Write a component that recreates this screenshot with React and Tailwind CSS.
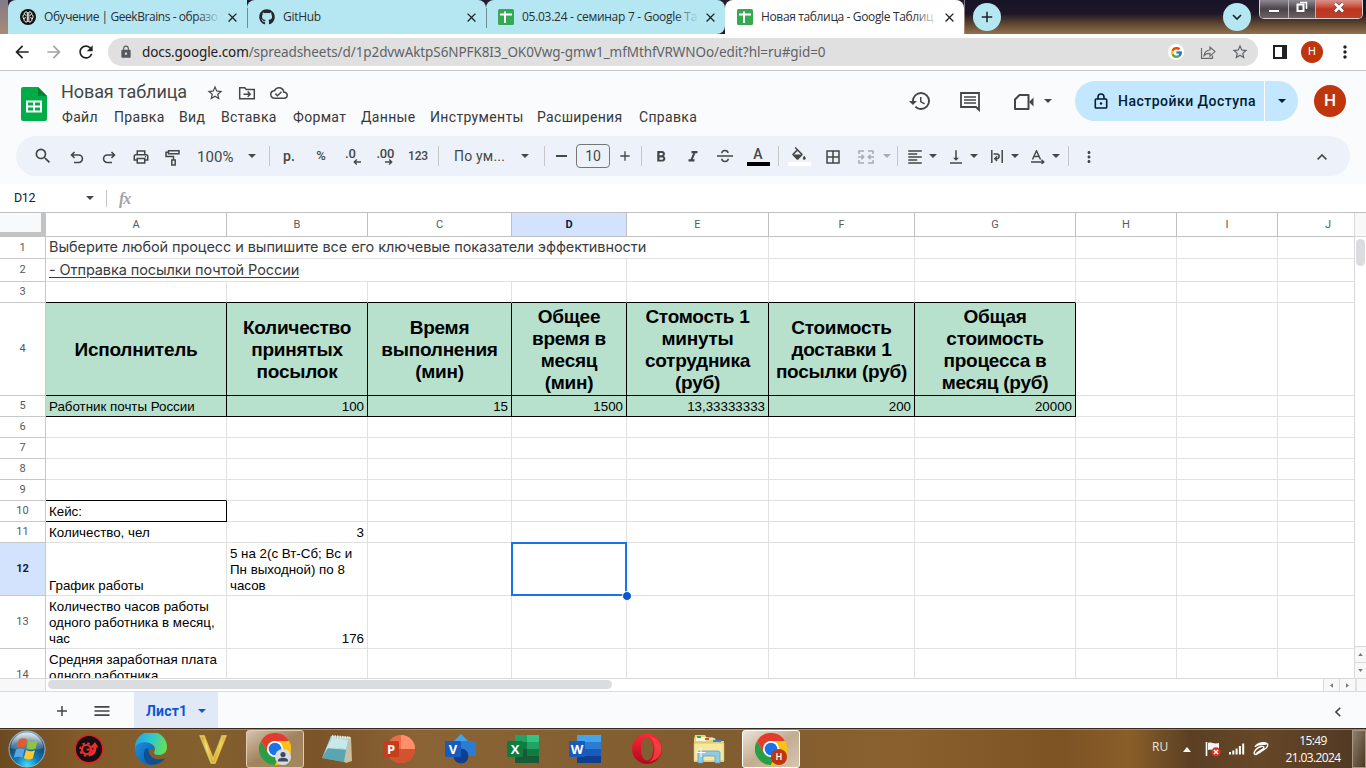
import React from "react";
import { FcGoogle } from "react-icons/fc";
import { FaGithub } from "react-icons/fa";
import {
  MdStarBorder, MdHistory, MdOutlinePrint, MdFormatBold, MdFormatItalic,
  MdBorderAll, MdFormatAlignLeft, MdVerticalAlignBottom, MdMoreVert, MdSearch, MdMenu,
  MdAdd, MdClose, MdLock, MdArrowBack, MdArrowForward, MdRefresh,
  MdOutlineCloudDone, MdFormatColorFill,
} from "react-icons/md";

function Caret({ className = "text-[#444746]" }) {
  return (
    <svg viewBox="0 0 8 4" className={`h-1 w-2 shrink-0 ${className}`}>
      <path d="M0 0h8L4 4z" fill="currentColor" />
    </svg>
  );
}

function SheetsFavicon() {
  return (
    <svg viewBox="0 0 16 16" className="h-4 w-4 shrink-0">
      <rect width="16" height="16" rx="1.5" fill="#34a853" />
      <path d="M2 4.500h12v2H2zM6 2.500h2v11.500H6z" fill="#fff" />
    </svg>
  );
}

function BrainFavicon() {
  return (
    <svg viewBox="0 0 16 16" className="h-4 w-4 shrink-0">
      <circle cx="8" cy="8" r="8" fill="#111" />
      <g fill="none" stroke="#fff" strokeWidth="1">
        <path d="M7.300 3v10M8.800 3v10M7 3C5 2.500 4 4 4.300 5.200 2.500 6 2.500 9 4 10c-.3 2 1.500 3.300 3 3M9 3c2-.5 3 1 2.700 2.200C13.500 6 13.500 9 12 10c.3 2-1.500 3.300-3 3M4.300 5.300c1 0 1.700.7 1.700 1.500M4 10c.2-1 1-1.400 2-1.200M11.700 5.300c-1 0-1.700.7-1.700 1.500M12 10c-.2-1-1-1.400-2-1.200" />
      </g>
    </svg>
  );
}

const tabs = [
  { icon: <BrainFavicon />, label: "Обучение | GeekBrains - образо", cls: "rounded-tl-lg bg-[#b4e7f2]", fade: "to-[#b4e7f2]", track: "tracking-[-0.44px]" },
  { icon: <FaGithub className="h-4 w-4 shrink-0 text-[#24292f]" />, label: "GitHub", cls: "rounded-t-lg bg-[#b4e7f2]", fade: "to-[#b4e7f2]", track: "tracking-[-0.3px]" },
  { icon: <SheetsFavicon />, label: "05.03.24 - семинар 7 - Google Та", cls: "rounded-t-lg rounded-br-lg bg-[#b4e7f2]", fade: "to-[#b4e7f2]", track: "tracking-[-0.28px]" },
  { icon: <SheetsFavicon />, label: "Новая таблица - Google Таблиц", cls: "rounded-t-lg bg-white", fade: "to-white", track: "tracking-[-0.36px]" },
];

function TabStrip() {
  return (
    <div className="flex h-[34px] items-start bg-[#1c1730] font-['Open_Sans','Noto_Sans',sans-serif]">
      <div className="flex h-[34px] w-[965px] shrink-0 bg-[linear-gradient(#82798a,#a98a74)] pl-2">
        <div className="flex h-[34px] bg-[#231b31]">
          {tabs.map((t, i) => (
            <div key={i} className={`relative flex h-[34px] w-[239px] shrink-0 items-center pl-3 ${t.cls}`}>
              {t.icon}
              <div className={`relative ml-2 w-[177px] overflow-hidden text-[12px] leading-4 whitespace-nowrap text-[#2b2f33] ${t.track}`}>
                {t.label}
                <div className={`absolute inset-y-0 right-0 w-6 bg-linear-to-r from-transparent ${t.fade}`} />
              </div>
              <MdClose className="ml-1 h-[15px] w-[15px] text-[#202124]" />
              {i < 2 && <div className="absolute top-2 -right-px z-10 h-5 w-px bg-[#6f8b93]" />}
            </div>
          ))}
        </div>
      </div>
      <div className="flex h-[34px] grow items-start bg-[linear-gradient(#171428_0%,#1d1727_40%,#5a422f_68%,#93724d_100%)] pl-2">
        <div className="mt-[3px] flex h-7 w-7 items-center justify-center rounded-full bg-[#b4e7f2]">
          <MdAdd className="h-[18px] w-[18px] text-[#202124]" />
        </div>
        <div className="mt-[3px] ml-[222px] flex h-7 w-7 items-center justify-center rounded-full bg-[#b4e7f2]">
          <svg viewBox="0 0 10 6" className="h-1.5 w-2.5"><path d="M1 1l4 4 4-4" fill="none" stroke="#202124" strokeWidth="1.700" /></svg>
        </div>
        <div className="ml-2 flex h-[19px] w-[104px] overflow-hidden rounded-b-[5px] border border-t-0 border-[#d8cfcf]">
          <div className="flex h-full w-[29px] items-center justify-center border-r border-[#b9b0b3] bg-linear-to-b from-[#8f8994] via-[#4b444c] to-[#6d6360]">
            <div className="mt-1 h-1 w-3 rounded-[1px] border border-[#4d4650] bg-white" />
          </div>
          <div className="flex h-full w-[27px] items-center justify-center border-r border-[#b9b0b3] bg-linear-to-b from-[#8f8994] via-[#4b444c] to-[#6d6360]">
            <svg viewBox="0 0 12 12" className="-mt-1 h-3 w-3"><path d="M4 1.500h6.500v6.500" fill="none" stroke="#fff" strokeWidth="1.500" /><rect x="1.500" y="3.500" width="6" height="6.500" fill="none" stroke="#fff" strokeWidth="2" /></svg>
          </div>
          <div className="flex h-full grow items-center justify-center bg-linear-to-b from-[#d9928a] via-[#c2331d] to-[#b8412e]">
            <svg viewBox="0 0 12 11" className="-mt-[3px] h-[11px] w-3"><path d="M2 1.500l8 8M10 1.500l-8 8" stroke="#5d4a53" strokeWidth="4" /><path d="M2 1.500l8 8M10 1.500l-8 8" stroke="#fff" strokeWidth="2.600" /></svg>
          </div>
        </div>
      </div>
    </div>
  );
}

function AddressBar() {
  return (
    <div className="flex h-[37px] items-center border-b border-[#c4c7ca] bg-white pl-3 font-['Noto_Sans','Open_Sans',sans-serif]">
      <MdArrowBack className="h-5 w-5 text-[#202124]" />
      <MdArrowForward className="ml-3 h-5 w-5 text-[#a4a4a4]" />
      <MdRefresh className="ml-3 h-5 w-5 text-[#202124]" />
      <div className="ml-3 flex h-7 w-[1150px] shrink-0 items-center rounded-full bg-[#e0e0e0] pl-[11px]">
        <MdLock className="h-3.5 w-3.5 text-[#55585c]" />
        <div className="ml-[9px] w-[1026px] shrink-0 text-[13.500px] tracking-[-0.085px] whitespace-nowrap text-[#5f6368]">
          <span className="text-[#202124]">docs.google.com</span>/spreadsheets/d/1p2dvwAktpS6NPFK8I3_OK0Vwg-gmw1_mfMthfVRWNOo/edit?hl=ru#gid=0
        </div>
        <div className="flex h-4 w-4 shrink-0 items-center justify-center rounded-full bg-white"><FcGoogle className="h-[13px] w-[13px]" /></div>
        <svg viewBox="0 0 16 16" className="ml-4 h-4 w-4 shrink-0" fill="none" stroke="#6b6b6b" strokeWidth="1.200">
          <path d="M1.500 4v10.400h11V11.500M4 11.500c.6-3.500 2.600-5.300 6-5.500V3l5 4.600-5 4.500V9.400C7.500 9.300 5.500 10 4 11.500z" />
        </svg>
        <MdStarBorder className="ml-[15px] h-[18px] w-[18px] shrink-0 text-[#5f6368]" />
      </div>
      <div className="ml-[15px] h-[14px] w-[14px] border-2 border-r-[5px] border-[#202124]" />
      <div className="ml-[14px] flex h-[22px] w-[22px] items-center justify-center rounded-full bg-[#c0360c] font-['Roboto',sans-serif] text-[11px] text-white">Н</div>
      <MdMoreVert className="ml-3 h-5 w-5 text-[#202124]" />
    </div>
  );
}

const menu = [
  ["Файл", "w-[52px]"], ["Правка", "w-[65px]"], ["Вид", "w-[42px]"], ["Вставка", "w-[72px]"],
  ["Формат", "w-[68px]"], ["Данные", "w-[69px]"], ["Инструменты", "w-[107px]"], ["Расширения", "w-[102px]"], ["Справка", "w-[60px]"],
];

function DocHeader() {
  return (
    <div className="flex h-[65px] bg-[#f9fbfd]">
      <svg viewBox="0 0 26 34" className="mt-4 ml-[21px] h-[34px] w-[26px] shrink-0">
        <path d="M2 0h15l9 9v23a2 2 0 0 1-2 2H2a2 2 0 0 1-2-2V2a2 2 0 0 1 2-2z" fill="#00ac47" />
        <path d="M17 0l9 9h-9z" fill="#00832d" />
        <path d="M5 13.500h16v12H5z" fill="#fff" />
        <path d="M7 15.500h5v3H7zM14 15.500h5v3h-5zM7 20.500h5v3H7zM14 20.500h5v3h-5z" fill="#00ac47" />
      </svg>
      <div className="ml-[14px] w-[700px] pt-[9px] font-['Roboto',sans-serif]">
        <div className="flex h-6 items-center">
          <div className="w-[145px] text-[18px] leading-6 tracking-[-0.08px] whitespace-nowrap text-[#444746]">Новая таблица</div>
          <MdStarBorder className="h-[18px] w-[18px] translate-y-px text-[#444746]" />
          <svg viewBox="0 0 18 16" className="ml-[14px] h-4 w-[18px] translate-y-px" fill="none" stroke="#444746" strokeWidth="1.500">
            <path d="M1.700 2.700h5l1.600 1.800h8v9.300H1.700zM1.700 2v3M5.500 9.200h6.500M9.700 6.600l2.500 2.600-2.500 2.600" />
          </svg>
          <MdOutlineCloudDone className="ml-[14px] h-[18px] w-[18px] translate-y-px text-[#444746]" />
        </div>
        <div className="mt-[3px] flex h-5 items-center pl-px text-[14px] tracking-[0.33px] text-[#37383a]">
          {menu.map(([label, w]) => <div key={label} className={`shrink-0 whitespace-nowrap ${w}`}>{label}</div>)}
        </div>
      </div>
      <div className="ml-auto flex h-[60px] items-center pr-5">
        <MdHistory className="h-6 w-6 text-[#444746]" />
        <svg viewBox="0 0 20 20" className="mt-0.5 ml-7 h-5 w-5" fill="none" stroke="#444746" strokeWidth="1.800">
          <path d="M1 1h18v17l-3-3H1z" /><path d="M4 5h12M4 8h12M4 11h12" strokeWidth="1.500" />
        </svg>
        <svg viewBox="0 0 22 18" className="mt-0.5 ml-[33px] h-[18px] w-[22px]" fill="none" stroke="#444746" strokeWidth="2">
          <path d="M6.500 2h9v14H2V6.500z" strokeLinejoin="round" /><path d="M16 9l4.500-4.500v9z" fill="#444746" stroke="none" />
        </svg>
        <Caret className="ml-[9px] text-[#444746]" />
        <div className="ml-[23px] flex h-10 w-[223px] overflow-hidden rounded-full bg-[#c2e7ff]">
          <div className="flex w-[190px] items-center border-r border-white pl-[19px]">
            <svg viewBox="0 0 14 16" className="h-4 w-[14px]" fill="none" stroke="#001d35" strokeWidth="1.600">
              <rect x="1.300" y="6" width="11.400" height="9" rx=".8" /><path d="M4 6V4a3 3 0 0 1 6 0v2" /><circle cx="7" cy="10.500" r="1.200" fill="#001d35" stroke="none" />
            </svg>
            <span className="ml-[10px] font-['Roboto',sans-serif] text-[14px] font-medium tracking-[0.48px] whitespace-nowrap text-[#001d35]">Настройки Доступа</span>
          </div>
          <div className="flex grow items-center justify-center"><Caret className="text-[#001d35]" /></div>
        </div>
        <div className="ml-4 flex h-8 w-8 items-center justify-center rounded-full bg-[#c0360c] font-['Roboto',sans-serif] text-[17px] font-medium text-white">Н</div>
      </div>
    </div>
  );
}

const Slot = ({ className, children }) => <div className={`flex h-full shrink-0 items-center ${className}`}>{children}</div>;
const Bar = ({ className }) => <div className={`h-5 w-px shrink-0 bg-[#c7c7c7] ${className}`} />;

function Toolbar() {
  return (
    <div className="flex h-12 bg-[#f9fbfd] px-4">
      <div className="flex h-10 w-full items-center rounded-full bg-[#edf2fa] pl-[10px] font-['Roboto',sans-serif] text-[14px] text-[#444746]">
        <Slot className="w-8 justify-center pl-px"><MdSearch className="h-5 w-5" /></Slot>
        <Slot className="ml-[3px] w-8 justify-center">
          <svg viewBox="0 0 14 14" className="mt-[3px] h-[14px] w-[14px]" fill="none" stroke="currentColor" strokeWidth="1.600"><path d="M4.500 1L1.500 4l3 3M1.500 4h7.200a3.700 3.700 0 0 1 0 7.500H4" /></svg>
        </Slot>
        <Slot className="w-8 justify-center">
          <svg viewBox="0 0 14 14" className="mt-[3px] h-[14px] w-[14px]" fill="none" stroke="currentColor" strokeWidth="1.600"><path d="M9.500 1l3 3-3 3M12.500 4H5.300a3.700 3.700 0 0 0 0 7.500H10" /></svg>
        </Slot>
        <Slot className="w-8 justify-center pt-px"><MdOutlinePrint className="h-[18px] w-[18px]" /></Slot>
        <Slot className="w-8 justify-center">
          <svg viewBox="0 0 15 18" className="mt-[3px] mr-[2px] h-[18px] w-[15px]" fill="none" stroke="currentColor" strokeWidth="1.500"><path d="M3.500 1.700h10.500v3H3.500zM3.500 3.200H1v4.300h7.500v3M6.800 11h3.400v5H6.800z" /></svg>
        </Slot>
        <Slot className="ml-2 w-[47px] pt-0.5 text-[15px] tracking-[0.1px]">100%</Slot>
        <Slot className="w-4 justify-center"><Caret /></Slot>
        <Bar className="ml-[9px]" />
        <Slot className="ml-[3px] w-8 justify-center font-medium">р.</Slot>
        <Slot className="w-8 justify-center text-[13px] font-medium">%</Slot>
        <Slot className="w-8 justify-center">
          <div className="flex w-4 flex-col"><span className="text-[13px] leading-[11px] font-medium">.0</span><svg viewBox="0 0 8 6" className="ml-2 h-1.5 w-2" fill="none" stroke="currentColor" strokeWidth="1.400"><path d="M8 3H1.500M3.800.600L1.300 3l2.500 2.400" /></svg></div>
        </Slot>
        <Slot className="w-[33px] justify-center">
          <div className="flex w-[18px] flex-col"><span className="text-[13px] leading-[11px] font-medium tracking-[-0.3px]">.00</span><svg viewBox="0 0 8 6" className="ml-2 h-1.5 w-2" fill="none" stroke="currentColor" strokeWidth="1.400"><path d="M0 3h6.500M4.200.600L6.700 3 4.200 5.400" /></svg></div>
        </Slot>
        <Slot className="w-8 justify-center text-[12px] font-medium tracking-[-0.2px]">123</Slot>
        <Bar className="ml-1" />
        <Slot className="ml-[15px] w-[62px] tracking-[0.2px] whitespace-nowrap">По ум...</Slot>
        <Slot className="ml-px w-4 justify-center"><Caret /></Slot>
        <Bar className="ml-[11px]" />
        <Slot className="ml-1 w-6 justify-center"><div className="h-[1.500px] w-[11px] bg-[#444746]" /></Slot>
        <div className="ml-[3px] flex h-6 w-[34px] shrink-0 items-center justify-center rounded-[4px] border border-[#747775]">10</div>
        <Slot className="ml-[3px] w-6 justify-center"><MdAdd className="h-4 w-4" /></Slot>
        <Bar className="ml-1" />
        <Slot className="ml-[3px] w-8 justify-center pt-px"><MdFormatBold className="h-[18px] w-[18px]" /></Slot>
        <Slot className="w-8 justify-center pt-px"><MdFormatItalic className="h-[18px] w-[18px]" /></Slot>
        <Slot className="w-8 justify-center">
          <svg viewBox="0 0 16 14" className="h-[14px] w-4" fill="none" stroke="currentColor" strokeWidth="1.500"><path d="M0 7h16M4.800 4.300a3 2.600 0 0 1 6.200-.3M4.800 9.700a3.200 2.700 0 0 0 6.400 0" /></svg>
        </Slot>
        <Slot className="w-[34px] justify-center"><div className="mt-px flex w-[23px] flex-col items-center"><span className="text-[14px] leading-[15px] font-medium">A</span><div className="h-1 w-[23px] bg-black" /></div></Slot>
        <Bar className="ml-[3px]" />
        <Slot className="ml-1 w-8 justify-center"><div className="mt-px flex w-[23px] flex-col items-center"><MdFormatColorFill className="-mb-[3px] h-[18px] w-[18px]" /><div className="h-1 w-[23px] bg-white" /></div></Slot>
        <Slot className="ml-0.5 w-8 justify-center pt-px"><MdBorderAll className="h-[18px] w-[18px]" /></Slot>
        <Slot className="ml-px w-8 justify-center pt-px text-[#a9adb2]">
          <svg viewBox="0 0 16 14" className="h-[14px] w-4" fill="none" stroke="currentColor" strokeWidth="1.500"><path d="M6 1H1v3M10 1h5v3M1 10v3h5M15 10v3h-5M0 7h5.500M3.500 4.800L5.700 7 3.500 9.200M16 7h-5.500M12.500 4.800L10.300 7l2.200 2.200" /></svg>
        </Slot>
        <Slot className="w-[10px] justify-center"><Caret className="text-[#a9adb2]" /></Slot>
        <Bar className="ml-[5px]" />
        <Slot className="ml-[7px] w-5 justify-center pt-px"><MdFormatAlignLeft className="h-[18px] w-[18px]" /></Slot>
        <Slot className="w-4 justify-center"><Caret /></Slot>
        <Slot className="ml-[5px] w-5 justify-center pt-px"><MdVerticalAlignBottom className="h-[18px] w-[18px]" /></Slot>
        <Slot className="w-4 justify-center"><Caret /></Slot>
        <Slot className="ml-[5px] w-5 justify-center pt-px">
          <svg viewBox="0 0 12 13" className="h-[13px] w-3" fill="none" stroke="currentColor" strokeWidth="1.500"><path d="M.8 0v13M11.200 0v13M2.500 4h3.300a2.300 2.300 0 0 1 0 4.700H4M6 6.300L3.800 8.700 6 11" /></svg>
        </Slot>
        <Slot className="w-4 justify-center"><Caret /></Slot>
        <Slot className="ml-[5px] w-5 justify-center pt-px">
          <svg viewBox="0 0 14 14" className="h-[14px] w-[14px]" fill="none" stroke="currentColor" strokeWidth="1.400"><path d="M1.500 9.500L5.500.700l4 8.800M3 6.500h5M0 12h12.500M10.500 9.800l2.300 2.200-2.300 2" /></svg>
        </Slot>
        <Slot className="w-4 justify-center"><Caret /></Slot>
        <Bar className="ml-1" />
        <Slot className="ml-[10px] w-5 justify-center pt-px"><MdMoreVert className="h-[18px] w-[18px]" /></Slot>
        <Slot className="mr-4 ml-auto w-6 justify-center pt-px"><svg viewBox="0 0 10 6" className="h-1.5 w-2.5" fill="none" stroke="currentColor" strokeWidth="1.600"><path d="M.6 5.400L5 1l4.400 4.400" /></svg></Slot>
      </div>
    </div>
  );
}

function FormulaBar() {
  return (
    <div className="flex h-[29px] items-center border-b border-[#c0c0c0] bg-white pl-[14px]">
      <div className="w-[72px] font-['Roboto',sans-serif] text-[12.500px] tracking-[-0.4px] text-[#202124]">D12</div>
      <Caret />
      <div className="ml-3 h-[17px] w-px bg-[#c7c7c7]" />
      <div className="mt-0.5 ml-3 font-['Liberation_Serif',serif] text-[16px] font-bold tracking-[-1px] text-[#a3a3a3] italic">fx</div>
    </div>
  );
}

const W = ["w-[181px]", "w-[141px]", "w-[144px]", "w-[115px]", "w-[142px]", "w-[146px]", "w-[161px]", "w-[101px]", "w-[101px]", "w-[101px]"];
const letters = ["A", "B", "C", "D", "E", "F", "G", "H", "I", "J"];

function ColumnHeaders() {
  return (
    <div className="flex h-6 w-full overflow-hidden font-['Roboto',sans-serif] text-[11px] text-[#575a5a]">
      <div className="h-6 w-[46px] shrink-0 border-r-[5px] border-b-[5px] border-[#c3c3c3] bg-[#f8f9fa]" />
      <div className="flex h-6 w-[1309px] shrink-0 overflow-hidden border-r border-[#d9d9d9]">
        {letters.map((l, i) => (
          <div key={l} className={`flex shrink-0 items-center justify-center border-r border-b border-[#c0c0c0] pt-px ${W[i]} ${l === "D" ? "bg-[#d3e3fd] font-bold text-[#041e49]" : "bg-white"}`}>{l}</div>
        ))}
      </div>
      <div className="grow border-b border-[#d9d9d9] bg-[#f8f8f8]" />
    </div>
  );
}

const heads = [
  ["Исполнитель"], ["Количество", "принятых", "посылок"], ["Время", "выполнения", "(мин)"], ["Общее", "время в", "месяц", "(мин)"],
  ["Стомость 1", "минуты", "сотрудника", "(руб)"], ["Стоимость", "доставки 1", "посылки (руб)"], ["Общая", "стоимость", "процесса в", "месяц (руб)"],
];
const values = ["Работник почты России", "100", "15", "1500", "13,33333333", "200", "20000"];

function Cell({ i, className = "border-[#e1e1e1]", children }) {
  return <div className={`relative shrink-0 border-r border-b ${W[i]} ${className}`}>{children}</div>;
}

function Row({ n, h, active, children }) {
  return (
    <div className={`flex shrink-0 ${h}`}>
      <div className={`flex w-[46px] shrink-0 items-center justify-center border-r border-b border-[#c8c8c8] pt-px font-['Roboto',sans-serif] text-[11px] ${active ? "bg-[#d3e3fd] font-bold text-[#041e49]" : "bg-white text-[#575a5a]"}`}>
        {n}
      </div>
      {children}
    </div>
  );
}

const empties = (from, to = 9) => W.slice(from, to + 1).map((_, k) => <Cell key={from + k} i={from + k} />);

const Lines = ({ lines }) => (
  <div className="absolute bottom-px left-[3px] leading-4 whitespace-nowrap">
    {lines.map((l) => <div key={l}>{l}</div>)}
  </div>
);
const Num = ({ children }) => <div className="absolute right-[3px] bottom-px leading-4">{children}</div>;

function Grid() {
  return (
    <div className="flex h-[441px] overflow-hidden">
      <div className="w-[1355px] shrink-0 overflow-hidden border-r border-[#d9d9d9] font-['Liberation_Sans',Arial,sans-serif] text-[13.333px] text-black">
        <Row n="1" h="h-[22px]">
          <div className="w-[723px] shrink-0 border-r border-b border-[#e1e1e1] pl-[3px] font-['Inter',sans-serif] text-[14.500px] leading-[20px] tracking-[-0.08px] whitespace-nowrap text-[#3a3b3e]">Выберите любой процесс и выпишите все его ключевые показатели эффективности</div>
          {empties(5)}
        </Row>
        <Row n="2" h="h-[23px]">
          <div className="w-[581px] shrink-0 border-r border-b border-[#e1e1e1] pl-[3px] font-['Inter',sans-serif] text-[14.500px] leading-[22px] tracking-[-0.09px] whitespace-nowrap text-[#3a3b3e] underline underline-offset-2">- Отправка посылки почтой России</div>
          {empties(4)}
        </Row>
        <Row n="3" h="h-[21px]">
          {heads.map((_, i) => <Cell key={i} i={i} className="border-r-[#e1e1e1] border-b-black" />)}
          {empties(7)}
        </Row>
        <Row n="4" h="h-[93px]">
          {heads.map((lines, i) => (
            <Cell key={i} i={i} className="flex flex-col items-center justify-center border-black bg-[#b7e1cd] pt-0.5 text-[19px] leading-[22px] font-bold tracking-[-0.25px] whitespace-nowrap">
              {lines.map((l) => <div key={l}>{l}</div>)}
            </Cell>
          ))}
          {empties(7)}
        </Row>
        <Row n="5" h="h-[21px]">
          {values.map((v, i) => (
            <Cell key={i} i={i} className="border-black bg-[#b7e1cd]">{i === 0 ? <Lines lines={[v]} /> : <Num>{v}</Num>}</Cell>
          ))}
          {empties(7)}
        </Row>
        {["6", "7", "8"].map((n) => <Row key={n} n={n} h="h-[21px]">{empties(0)}</Row>)}
        <Row n="9" h="h-[21px]"><Cell i={0} className="border-r-[#e1e1e1] border-b-black" />{empties(1)}</Row>
        <Row n="10" h="h-[21px]"><Cell i={0} className="border-black"><Lines lines={["Кейс:"]} /></Cell>{empties(1)}</Row>
        <Row n="11" h="h-[21px]">
          <Cell i={0}><Lines lines={["Количество, чел"]} /></Cell><Cell i={1}><Num>3</Num></Cell>{empties(2)}
        </Row>
        <Row n="12" h="h-[53px]" active>
          <Cell i={0}><Lines lines={["График работы"]} /></Cell>
          <Cell i={1}><Lines lines={["5 на 2(с Вт-Сб; Вс и", "Пн выходной) по 8", "часов"]} /></Cell>
          <Cell i={2} />
          <Cell i={3}>
            <div className="absolute -top-px -right-px -bottom-px -left-px z-10 border-2 border-[#1a73e8]" />
            <div className="absolute -right-[6px] -bottom-[6px] z-20 h-[10px] w-[10px] rounded-full border border-white bg-[#0b57d0]" />
          </Cell>
          {empties(4)}
        </Row>
        <Row n="13" h="h-[53px]">
          <Cell i={0}><Lines lines={["Количество часов работы", "одного работника в месяц,", "час"]} /></Cell><Cell i={1}><Num>176</Num></Cell>{empties(2)}
        </Row>
        <Row n="14" h="h-[53px]">
          <Cell i={0}><div className="absolute top-[3px] left-[3px] leading-4 whitespace-nowrap"><div>Средняя заработная плата</div><div>одного работника</div></div></Cell>{empties(1)}
        </Row>
      </div>
      <div className="flex grow flex-col items-center bg-white">
        <div className="mt-0.5 h-[27px] w-[9px] rounded-full bg-[#dadce0]" />
        <div className="mt-auto flex h-4 w-full items-center justify-center border-t border-[#d9d9d9] bg-[#f8f8f8]"><svg viewBox="0 0 6 4" className="h-[3px] w-[5px]"><path d="M0 4h6L3 0z" fill="#777" /></svg></div>
        <div className="flex h-4 w-full items-center justify-center border-t border-[#d9d9d9] bg-[#f8f8f8]"><svg viewBox="0 0 6 4" className="h-[3px] w-[5px]"><path d="M0 0h6L3 4z" fill="#777" /></svg></div>
      </div>
    </div>
  );
}

function HorizontalScroll() {
  return (
    <div className="flex h-[13px] border-t border-[#d9d9d9] bg-white">
      <div className="w-[46px] shrink-0 border-r border-[#d9d9d9] bg-[#f8f8f8]" />
      <div className="mt-px ml-0.5 h-[9px] w-[564px] shrink-0 rounded-full bg-[#dadce0]" />
      <div className="ml-auto flex w-4 items-center justify-center border-l border-[#d9d9d9] bg-[#f8f8f8]"><svg viewBox="0 0 4 6" className="h-[5px] w-[3px]"><path d="M4 0v6L0 3z" fill="#777" /></svg></div>
      <div className="flex w-4 items-center justify-center border-l border-[#d9d9d9] bg-[#f8f8f8]"><svg viewBox="0 0 4 6" className="h-[5px] w-[3px]"><path d="M0 0v6l4-3z" fill="#777" /></svg></div>
      <div className="w-[11px] border-l-2 border-[#e1e1e1] bg-[#f8f8f8]" />
    </div>
  );
}

function SheetBar() {
  return (
    <div className="flex h-[37px] items-center border-t border-[#d9dbde] bg-[#f9fbfd] pl-[53px] text-[#444746]">
      <svg viewBox="0 0 10 10" className="mt-0.5 ml-1 h-2.5 w-2.5"><path d="M5 0v10M0 5h10" stroke="currentColor" strokeWidth="1.500" /></svg>
      <MdMenu className="mt-0.5 ml-[25px] h-5 w-5" />
      <div className="ml-[22px] flex h-full w-[84px] items-center bg-[#e1e9f7] pt-0.5 pl-3 font-['Roboto',sans-serif] text-[14px] font-bold text-[#0b57d0]">
        <span className="w-[52px] tracking-[0.2px] whitespace-nowrap">Лист1</span>
        <Caret className="text-[#0b57d0]" />
      </div>
      <svg viewBox="0 0 6 10" className="mt-[3px] mr-[25px] ml-auto h-2.5 w-1.5"><path d="M5.300.700L1 5l4.300 4.300" fill="none" stroke="#444746" strokeWidth="1.600" /></svg>
    </div>
  );
}

function StartOrb() {
  return (
    <svg viewBox="0 0 38 38" className="h-[38px] w-[38px]">
      <defs>
        <radialGradient id="orb" cx=".5" cy=".95" r=".9"><stop offset="0" stopColor="#3fe0ff" /><stop offset=".35" stopColor="#137ab5" /><stop offset=".75" stopColor="#16456e" /><stop offset="1" stopColor="#7fa6c2" /></radialGradient>
        <linearGradient id="shine" x1="0" y1="0" x2="0" y2="1"><stop offset="0" stopColor="#fff" stopOpacity=".75" /><stop offset="1" stopColor="#fff" stopOpacity=".12" /></linearGradient>
      </defs>
      <circle cx="19" cy="19" r="18" fill="url(#orb)" stroke="#98b6c8" strokeWidth="1" />
      <path d="M2.500 18C4 8 11 2.500 19 2.500S34 8 35.500 18c-8 3-25 3-33 0z" fill="url(#shine)" />
      <path d="M11 9.500c3-1.800 5.500-1.500 8 0L17 18c-3-1.500-5.500-1.500-8.500-.2z" fill="#e5592b" />
      <path d="M20.500 10.200c3 1.500 6 1.600 9.300.3l-2.300 8c-3 1.500-6 1.300-9-.2z" fill="#8cc63f" />
      <path d="M8 19.500c3-1.500 5.500-1.300 8.500.1l-2.200 8.200c-2.800-1.500-5.300-1.500-8.500-.1z" fill="#58a7e2" />
      <path d="M18 20c3 1.500 6 1.700 9 .3l-2.300 8.200c-3 1.500-5.800 1.200-8.800-.3z" fill="#fdc82f" />
    </svg>
  );
}

function ChromeLogo({ badge }) {
  return (
    <svg viewBox="0 0 32 32" className="h-8 w-8">
      <circle cx="16" cy="16" r="16" fill="#fbc116" />
      <path d="M2.100 8A16 16 0 0 0 16 32l6.900-12H9.100z" fill="#2a9d49" />
      <path d="M2.100 8A16 16 0 0 1 29.900 8H16a8 8 0 0 0-6.900 12z" fill="#e33b2e" />
      <path d="M16 32l6.900-12A8 8 0 0 0 16 8h13.900A16 16 0 0 1 16 32z" fill="#fbc116" />
      <circle cx="16" cy="16" r="8" fill="#fff" /><circle cx="16" cy="16" r="6.300" fill="#1a73e8" />
      {badge === "user" ? (
        <g><circle cx="24" cy="24" r="8" fill="#d9dde3" /><circle cx="24" cy="21.500" r="2.600" fill="#3c4a60" /><path d="M18.800 28.500c0-3 2.500-3.700 5.200-3.700s5.200.7 5.200 3.700z" fill="#3c4a60" /></g>
      ) : (
        <g><circle cx="24" cy="24" r="8" fill="#c0360c" /><text x="24" y="27.300" textAnchor="middle" fontSize="9" fontFamily="Roboto" fontWeight="500" fill="#fff">Н</text></g>
      )}
    </svg>
  );
}

function Badge({ color, letter }) {
  return <g><rect x="0" y="7" width="16" height="16" rx="1" fill={color} /><text x="8" y="19.600" textAnchor="middle" fontSize="13" fontFamily="Open Sans" fontWeight="700" fill="#fff">{letter}</text></g>;
}

const apps = [
  <svg viewBox="0 0 30 30" className="h-[30px] w-[30px]">
    <circle cx="15" cy="15" r="13.800" fill="#111" stroke="#ed1c24" strokeWidth="1.500" />
    <circle cx="12.500" cy="15.500" r="4.500" fill="none" stroke="#ef2b2d" strokeWidth="2.200" />
    <circle cx="12.500" cy="15.500" r="6.300" fill="none" stroke="#ef2b2d" strokeWidth="2" strokeDasharray="2.500 2.450" />
    <path d="M12.500 15.500h4" stroke="#ef2b2d" strokeWidth="2" /><path d="M15 21c4.500-.5 6-4 6-8" fill="none" stroke="#ef2b2d" strokeWidth="3" /><path d="M16.500 13l4.500-5 3.500 5.500z" fill="#ef2b2d" />
  </svg>,
  <svg viewBox="0 0 32 32" className="h-8 w-8">
    <defs>
      <linearGradient id="edgeTop" x1="0" y1=".3" x2="1" y2=".5"><stop offset="0" stopColor="#24a5e0" /><stop offset=".5" stopColor="#2fc8cf" /><stop offset="1" stopColor="#66e04f" /></linearGradient>
      <linearGradient id="edgeLow" x1="0" y1="0" x2="1" y2="1"><stop offset="0" stopColor="#1b8fe0" /><stop offset="1" stopColor="#0c59a4" /></linearGradient>
    </defs>
    <path d="M0 15A16 16 0 0 1 32 14c0 6-4.500 8-8.500 8s-5-1.600-4.300-3c2-3 .3-8.500-6.200-8.500C6 10.500 1 13 0 18z" fill="url(#edgeTop)" />
    <path d="M0 16c0-5 6-7.500 11.500-6.700 5 .8 8 3.700 8 7.700-6-4-11 6-3 15C7 32 0 25 0 16z" fill="url(#edgeLow)" />
    <path d="M13 15c-4 5-1.500 12 4.500 14.500 4 1.500 9.500.5 12-4-6 2.500-16 1-16.500-10.500z" fill="#114a8b" />
    <path d="M10 16c-3 8 0 14 6 16 6 0 11-2.500 13.800-7-6 3.500-18.800 1-16.600-9.800z" fill="#114f95" />
  </svg>,
  <svg viewBox="0 0 30 32" className="h-8 w-[30px]">
    <defs><linearGradient id="gold" x1="0" x2="1"><stop offset="0" stopColor="#a88522" /><stop offset=".25" stopColor="#f8e884" /><stop offset=".5" stopColor="#c9a52c" /><stop offset=".8" stopColor="#f0d964" /><stop offset="1" stopColor="#b8952c" /></linearGradient></defs>
    <text x="15" y="30" textAnchor="middle" fontSize="39" fontFamily="Liberation Sans" fill="url(#gold)" stroke="#e3c84f" strokeWidth="1.300">V</text>
  </svg>,
  <ChromeLogo badge="user" />,
  <svg viewBox="0 0 32 30" className="h-[30px] w-8">
    <path d="M10 2l20 1 1 24-6 2-3-2z" fill="#c9c0a4" /><path d="M10 2l18 2-5 24L1 24z" fill="#9bd0d6" /><path d="M11 4l16 2-2 9c-7-2-13 1-20 0z" fill="#d5edee" opacity=".8" /><path d="M7 14l18 2-2 12L1 24z" fill="#398c9d" opacity=".65" />
    <path d="M11 2.500l18 1.500" stroke="#e8e8e8" strokeWidth="3" strokeDasharray="1.500 1" />
  </svg>,
  <svg viewBox="0 0 32 30" className="h-[30px] w-8"><circle cx="18" cy="15" r="14" fill="#ed6c47" /><path d="M18 1a14 14 0 0 1 14 14H18z" fill="#ff8f6b" /><path d="M4 15h28a14 14 0 0 1-28 0z" fill="#d35230" /><Badge color="#c43e1c" letter="P" /></svg>,
  <svg viewBox="0 0 32 30" className="h-[30px] w-8"><path d="M16 0l8 8-8 8-8-8z" fill="#41a5ee" /><path d="M16 7h15v15H16z" fill="#2b7cd3" /><circle cx="16" cy="22" r="7.500" fill="#103f91" /><Badge color="#185abd" letter="V" /></svg>,
  <svg viewBox="0 0 32 30" className="h-[30px] w-8"><path d="M8 1h12v7H8z" fill="#21a366" /><path d="M20 1h12v7H20z" fill="#33c481" /><path d="M8 8h12v7H8z" fill="#107c41" /><path d="M20 8h12v7H20z" fill="#21a366" /><path d="M8 15h24v14H8z" fill="#185c37" /><path d="M20 15h12v7H20z" fill="#107c41" /><Badge color="#107c41" letter="X" /></svg>,
  <svg viewBox="0 0 32 30" className="h-[30px] w-8"><path d="M8 1h24v7H8z" fill="#41a5ee" /><path d="M8 8h24v7H8z" fill="#2b7cd3" /><path d="M8 15h24v7H8z" fill="#185abd" /><path d="M8 22h24v7H8z" fill="#103f91" /><Badge color="#185abd" letter="W" /></svg>,
  <svg viewBox="0 0 30 30" className="h-[30px] w-[30px]">
    <defs><linearGradient id="opera" x1="0" y1="0" x2="0" y2="1"><stop offset="0" stopColor="#ff2636" /><stop offset="1" stopColor="#b2061b" /></linearGradient></defs>
    <path fillRule="evenodd" d="M15 0a15 15 0 1 0 0 30 15 15 0 0 0 0-30zm0 3.500c3.600 0 6 5 6 11.500s-2.400 11.500-6 11.500S9 21.500 9 15s2.400-11.500 6-11.500z" fill="url(#opera)" />
    <path d="M16 2c4 1 6.500 6.500 6.500 13S20 27 16 28c8-1 13.500-6 13.500-13S24 3 16 2z" fill="#ff4b4b" opacity=".7" />
  </svg>,
  <svg viewBox="0 0 32 30" className="h-[30px] w-8">
    <path d="M2 1h10l2 3h8l1 3h8v21H1V5z" fill="#e8d37c" /><path d="M3 3h10v4H3z" fill="#fff7d8" /><path d="M4 2h4v2H4z" fill="#27b34a" /><path d="M12 3.500h8v2h-8z" fill="#f5f0dc" /><path d="M12 4h4v2h-4z" fill="#d9542b" /><path d="M20 6h8v2h-8z" fill="#2a8fe0" />
    <path d="M1 9h30v18H1z" fill="#f6e7a1" stroke="#cdb55c" strokeWidth=".6" />
    <path d="M5 29V19c0-1.500 1-2 2-2h18c1 0 2 .5 2 2v10h-5v-7H10v7z" fill="#8fcbe6" stroke="#4a9cc2" strokeWidth=".7" /><path d="M8 14v9M3.500 18.500h9" stroke="#fff" strokeWidth="1" />
  </svg>,
  <ChromeLogo badge="letter" />,
];

function Taskbar() {
  return (
    <div className="flex h-10 border-t border-[#3a2a1c] bg-[linear-gradient(90deg,#6c4a20_0px,#835a29_80px,#84602f_200px,#7b542a_320px,#8a6435_420px,#805c30_700px,#8a602e_900px,#7d5324_1060px,#8a5e29_1130px,#5b3f23_1190px,#664727_1260px,#4f3822_1366px)] font-['Open_Sans','Noto_Sans',sans-serif]">
      <div className="flex w-full border-t border-[#b99c78]/70">
        <div className="flex w-[58px] shrink-0 items-center pl-2"><StartOrb /></div>
        {apps.map((a, i) => (
          <div key={i} className="flex h-[38px] w-[62px] shrink-0 items-center justify-center">
            <div className={`flex h-[38px] w-[58px] items-center justify-center ${i === 3 ? "rounded-[3px] border border-[#dfccb2] bg-linear-to-br from-[#d5c4ae] via-[#a2835e] to-[#a48760]" : ""} ${i === 11 ? "rounded-[3px] border border-white bg-linear-to-br from-[#ece3d8] via-[#c3ad91] to-[#d6c5af]" : ""}`}>{a}</div>
          </div>
        ))}
        <div className="ml-auto flex items-center text-white">
          <div className="mb-1 w-[31px] text-[12px] text-[#e9e2da]">RU</div>
          <svg viewBox="0 0 8 5" className="h-[5px] w-2"><path d="M0 5h8L4 0z" fill="#fff" /></svg>
          <svg viewBox="0 0 16 16" className="ml-[14px] h-4 w-4"><path d="M1.500 1v14" stroke="#fff" strokeWidth="1.600" /><path d="M3 2c4-1.500 5 1.500 11 0v7c-5 1.500-7-1-11 0z" fill="#f4f4f4" /><circle cx="11" cy="11" r="4.700" fill="#d93025" /><path d="M9 9l4 4M13 9l-4 4" stroke="#fff" strokeWidth="1.500" /></svg>
          <svg viewBox="0 0 16 12" className="ml-2 h-3 w-4"><path d="M0 9h2v2.500H0zM3.300 7.500h2v4h-2zM6.600 5.500h2v6h-2zM9.900 3h2v8.500h-2zM13.200.500h2v11h-2z" fill="#fff" /></svg>
          <svg viewBox="0 0 16 14" className="ml-2 h-[14px] w-4"><path d="M2 5C5 0 12 0 14.500 2c1 3-2 5-5 6.500-3 2-5 4-7.500 4C-.5 10 4 5.500 8 4.500c2-.5 4 .5 2 2.500-2 1.500-5 2.500-7 5" fill="none" stroke="#fff" strokeWidth="1.400" /><path d="M2 5C5 0 12 0 14.500 2 11 4 7 2 2 5z" fill="#fff" /></svg>
          <div className="ml-[15px] w-[58px] text-center text-[12px] leading-[17px] tracking-[-0.6px]"><div>15:49</div><div>21.03.2024</div></div>
          <div className="ml-[10px] h-[38px] w-[14px] border border-[#a89880] bg-linear-to-br from-[#8f8270] to-[#4b3824]" />
        </div>
      </div>
    </div>
  );
}

export default function App() {
  return (
    <div className="flex h-[768px] w-[1366px] flex-col overflow-hidden bg-white">
      <TabStrip />
      <AddressBar />
      <DocHeader />
      <Toolbar />
      <FormulaBar />
      <ColumnHeaders />
      <Grid />
      <HorizontalScroll />
      <SheetBar />
      <Taskbar />
    </div>
  );
}
